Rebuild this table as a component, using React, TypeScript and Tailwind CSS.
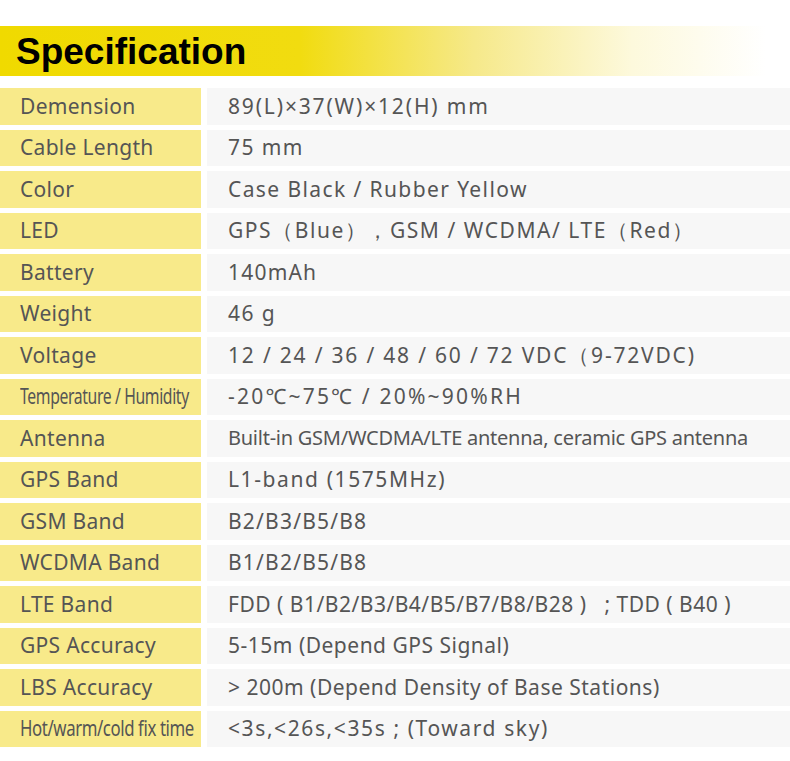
import React from "react";

type Spec = { label: string; value: string; labelCls?: string; valueCls: string; narrow?: boolean };

const specs: Spec[] = [
  { label: "Demension", value: "89(L)×37(W)×12(H) mm", valueCls: "text-[21px] tracking-[1.85px]" },
  { label: "Cable Length", value: "75 mm", valueCls: "text-[21px] tracking-[1.4px]" },
  { label: "Color", value: "Case Black / Rubber Yellow", valueCls: "text-[21px] tracking-[1.4px]" },
  { label: "LED", value: "GPS（Blue），GSM / WCDMA/ LTE（Red）", valueCls: "text-[21px] tracking-[1.55px]" },
  { label: "Battery", value: "140mAh", valueCls: "text-[21px] tracking-[1.2px]" },
  { label: "Weight", value: "46 g", valueCls: "text-[21px] tracking-[1.4px]" },
  { label: "Voltage", value: "12 / 24 / 36 / 48 / 60 / 72 VDC（9-72VDC)", valueCls: "text-[21px] tracking-[1.8px]" },
  {
    label: "Temperature / Humidity",
    value: "-20℃~75℃ / 20%~90%RH",
    valueCls: "text-[21px] tracking-[2.2px]",
    narrow: true,
    labelCls: "scale-x-[0.75]",
  },
  { label: "Antenna", value: "Built-in GSM/WCDMA/LTE antenna, ceramic GPS antenna", valueCls: "text-[20px] tracking-[-0.25px]" },
  { label: "GPS Band", value: "L1-band (1575MHz)", valueCls: "text-[21px] tracking-[1.6px]" },
  { label: "GSM Band", value: "B2/B3/B5/B8", valueCls: "text-[21px] tracking-[1.2px]" },
  { label: "WCDMA Band", value: "B1/B2/B5/B8", valueCls: "text-[21px] tracking-[1.2px]" },
  { label: "LTE Band", value: "FDD ( B1/B2/B3/B4/B5/B7/B8/B28 )   ; TDD ( B40 )", valueCls: "text-[21px] tracking-[0.5px]" },
  { label: "GPS Accuracy", value: "5-15m (Depend GPS Signal)", valueCls: "text-[21px] tracking-[0.5px]" },
  { label: "LBS Accuracy", value: "> 200m (Depend Density of Base Stations)", valueCls: "text-[21px] tracking-[0.5px]" },
  {
    label: "Hot/warm/cold fix time",
    value: "<3s,<26s,<35s ; (Toward sky)",
    valueCls: "text-[21px] tracking-[1.6px]",
    narrow: true,
    labelCls: "scale-x-[0.8]",
  },
];

function Row({ spec }: { spec: Spec }) {
  return (
    <div className="flex h-[36.5px] gap-[6px]">
      <div className="flex w-[201px] shrink-0 items-center overflow-hidden bg-[#f8ea8a] pl-[20px]">
        {spec.narrow ? (
          <span className={`inline-block origin-left whitespace-nowrap text-[21px] tracking-[-0.5px] ${spec.labelCls}`}>
            {spec.label}
          </span>
        ) : (
          <span className="whitespace-nowrap text-[21px] tracking-[0.3px]">{spec.label}</span>
        )}
      </div>
      <div className="flex flex-1 items-center bg-[#f7f7f7] pl-[21px]">
        <span className={`whitespace-pre ${spec.valueCls}`}>{spec.value}</span>
      </div>
    </div>
  );
}

export default function App() {
  return (
    <div className="h-[761px] w-[790px] bg-white pt-[26px] font-['Noto_Sans',sans-serif] text-[#555]">
      <div className="flex h-[50px] items-center bg-[linear-gradient(to_right,#f0da00_0%,#f1dc10_38%,#f6e98a_60%,#fdf9dc_80%,#ffffff_97%)] pl-[16px]">
        <h1 className="font-['Liberation_Sans',Arial,sans-serif] text-[37px] font-bold leading-none text-black">
          Specification
        </h1>
      </div>
      <div className="mt-[12px] flex flex-col gap-[5px]">
        {specs.map((s) => (
          <Row key={s.label} spec={s} />
        ))}
      </div>
    </div>
  );
}
